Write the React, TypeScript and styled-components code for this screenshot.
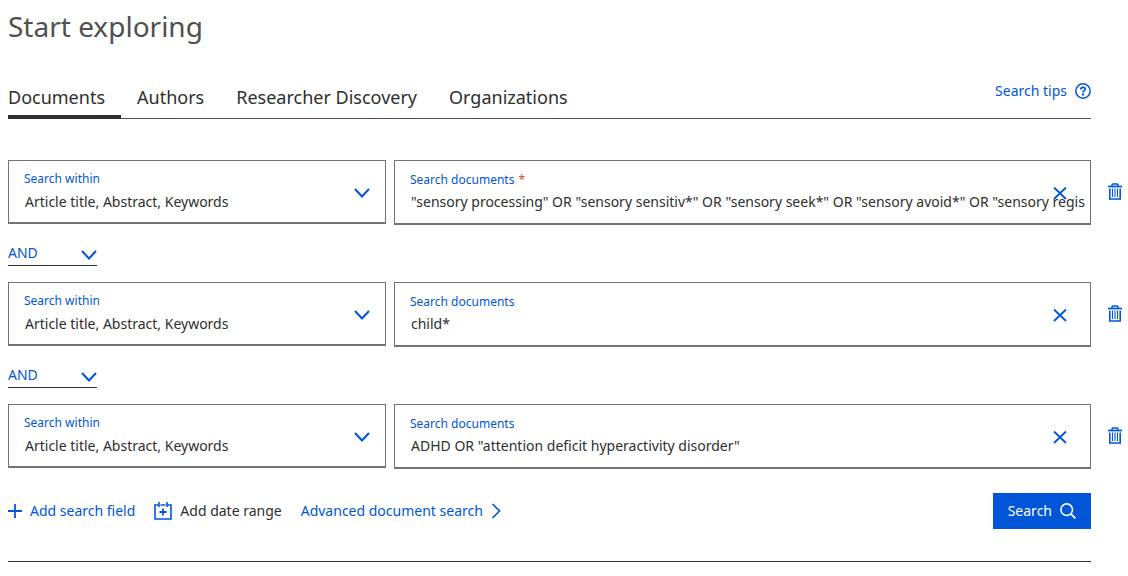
import React, { useState } from "react";
import styled, { createGlobalStyle } from "styled-components";

const blue = "#0056d6";
const ink = "#2e2e2e";

const GlobalStyle = createGlobalStyle`
  *, *::before, *::after { box-sizing: border-box; }
  body {
    margin: 0;
    background: #fff;
    color: ${ink};
    font-family: "Noto Sans", "Open Sans", sans-serif;
    font-size: 14px;
    line-height: 20px;
  }
  button, input, select { font: inherit; color: inherit; letter-spacing: inherit; }
  button { background: none; border: 0; padding: 0; cursor: pointer; }
`;

const Page = styled.main`
  padding: 8px 0 8px 8px;
`;

const Content = styled.div`
  margin-right: 37px;
`;

const Title = styled.h1`
  margin: 0;
  font-size: 28px;
  line-height: 36px;
  font-weight: 400;
  color: #505050;
`;

const TabBar = styled.div`
  display: flex;
  justify-content: space-between;
  align-items: flex-start;
  margin-top: 36px;
  border-bottom: 1px solid #505050;
`;

const TabList = styled.div`
  display: flex;
  gap: 16px;
`;

const Tab = styled.button<{ $active: boolean }>`
  height: 39px;
  margin-bottom: -1px;
  padding: 5px 16px 6px 0;
  border-bottom: 4px solid ${(p) => (p.$active ? ink : "transparent")};
  font-size: 18px;
  line-height: 24px;
`;

const TextLink = styled.a`
  display: inline-flex;
  align-items: center;
  gap: 8px;
  color: ${blue};
  text-decoration: none;
`;

const TipsLink = styled(TextLink)`
  padding-top: 1px;
`;

const Rows = styled.div`
  margin-top: 41px;
`;

const QueryRow = styled.div`
  display: grid;
  grid-template-columns: minmax(0, 378fr) minmax(0, 697fr) 29px;
  column-gap: 8px;
  align-items: start;
`;

const Field = styled.div`
  position: relative;
`;

const FieldLabel = styled.label`
  position: absolute;
  top: 9px;
  left: 16px;
  font-size: 12px;
  line-height: 20px;
  color: ${blue};
  pointer-events: none;
`;

const QueryLabel = styled(FieldLabel)`
  top: 10px;
`;

const Required = styled.span`
  margin-left: 4px;
  color: #d0473b;
`;

const ScopeSelect = styled.select`
  appearance: none;
  display: block;
  width: 100%;
  height: 64px;
  padding: 20px 48px 0 16px;
  border: 1px solid #737373;
  border-bottom-width: 2px;
  border-radius: 0;
  background: #fff;
`;

const QueryInput = styled.input`
  display: block;
  width: 100%;
  height: 65px;
  padding: 19px 2px 0 16px;
  border: 1px solid #737373;
  border-bottom-width: 2px;
  border-radius: 0;
  background: #fff;
  outline: none;
`;

const SelectArrow = styled.svg`
  position: absolute;
  right: 16px;
  top: 50%;
  margin-top: -7px;
  pointer-events: none;
`;

const ClearButton = styled.button`
  position: absolute;
  right: 23px;
  top: 25px;
  width: 16px;
  height: 16px;
  color: ${blue};
`;

const DeleteButton = styled.button`
  display: flex;
  justify-content: center;
  align-items: center;
  height: 64px;
  padding-left: 2px;
  color: ${blue};
`;

const Operator = styled.div`
  position: relative;
  width: 89px;
  margin: 16px 0;
`;

const OperatorSelect = styled.select`
  appearance: none;
  display: block;
  width: 100%;
  height: 25px;
  padding: 0 24px 0 0;
  border: 0;
  border-bottom: 1px solid ${ink};
  border-radius: 0;
  background: #fff;
  color: ${blue};
`;

const Actions = styled.div`
  display: flex;
  align-items: center;
  gap: 19px;
  padding: 24px 0 32px;
  border-bottom: 1px solid ${ink};
`;

const ActionButton = styled.button<{ $plain?: boolean }>`
  display: inline-flex;
  align-items: center;
  gap: 8px;
  color: ${(p) => (p.$plain ? ink : blue)};
  white-space: nowrap;
`;

const SearchButton = styled.button`
  display: inline-flex;
  justify-content: center;
  align-items: center;
  gap: 8px;
  height: 36px;
  margin-left: auto;
  padding: 0 15px;
  background: ${blue};
  color: #fff;
`;

const chevronPath = "M1 4 L8 11.5 L15 4";
const stroke = { fill: "none", stroke: blue, strokeWidth: 2 } as const;

const ArrowIcon = () => (
  <SelectArrow width="16" height="16" viewBox="0 0 16 16" {...stroke} aria-hidden="true">
    <path d={chevronPath} />
  </SelectArrow>
);

const OperatorArrow = styled(SelectArrow)`
  right: 0;
`;

const HelpIcon = () => (
  <svg width="16" height="16" viewBox="0 0 16 16" fill="none" stroke={blue} aria-hidden="true">
    <circle cx="8" cy="8" r="7.2" strokeWidth="1.5" />
    <path d="M5.8 6.5 C5.8 3.6 10.2 3.7 10.2 6.2 C10.2 7.7 8 7.6 8 9.5" strokeWidth="1.8" />
    <path d="M8 10.6 V12.4" strokeWidth="2" />
  </svg>
);

const CloseIcon = () => (
  <svg width="16" height="16" viewBox="0 0 16 16" {...stroke} display="block" aria-hidden="true">
    <path d="M2 2.5 L14 14 M14 2.5 L2 14" strokeWidth="1.8" />
  </svg>
);

const TrashIcon = () => (
  <svg width="16" height="18" viewBox="0 0 16 18" fill="none" stroke={blue} strokeWidth="1.5" aria-hidden="true">
    <path d="M1 3.5 H15" strokeWidth="1.7" />
    <path d="M5 3.5 V2 Q5 1 6 1 H10 Q11 1 11 2 V3.5" />
    <path d="M2.8 5.5 V16 H13.2 V5.5" strokeWidth="1.6" />
    <path d="M5.5 5.5 V14 M8 5.5 V14 M10.5 5.5 V14" strokeWidth="1.1" />
  </svg>
);

const PlusIcon = () => (
  <svg width="14" height="14" viewBox="0 0 14 14" {...stroke} strokeWidth="1.8" aria-hidden="true">
    <path d="M7 0 V14 M0 7 H14" />
  </svg>
);

const CalendarIcon = () => (
  <svg width="18" height="18" viewBox="0 0 18 18" {...stroke} strokeWidth="1.6" aria-hidden="true">
    <path d="M4.5 3 H1 V17 H17 V3 H13.5 M6.5 3 H11.5" />
    <path d="M5 0 V5 M13 0 V5" />
    <path d="M9 6.5 V13.5 M5.5 10 H12.5" strokeWidth="1.8" />
  </svg>
);

const ChevronRightIcon = () => (
  <svg width="10" height="16" viewBox="0 0 10 16" {...stroke} strokeWidth="1.7" aria-hidden="true">
    <path d="M1.5 1 L8.5 8 L1.5 15" />
  </svg>
);

const SearchIcon = () => (
  <svg width="16" height="16" viewBox="0 0 16 16" fill="none" stroke="#fff" strokeWidth="1.6" aria-hidden="true">
    <circle cx="6.7" cy="6.7" r="5.8" />
    <path d="M10.9 10.9 L15.4 15.4" strokeWidth="1.9" />
  </svg>
);

const tabs = ["Documents", "Authors", "Researcher Discovery", "Organizations"];

const initialQueries = [
  '"sensory processing" OR "sensory sensitiv*" OR "sensory seek*" OR "sensory avoid*" OR "sensory regis',
  "child*",
  'ADHD OR "attention deficit hyperactivity disorder"',
];

export default function App() {
  const [active, setActive] = useState(0);
  const [queries, setQueries] = useState(initialQueries);

  const update = (index: number, value: string) =>
    setQueries(queries.map((q, i) => (i === index ? value : q)));

  return (
    <Page>
      <GlobalStyle />
      <Content>
        <Title>Start exploring</Title>
        <TabBar>
          <TabList role="tablist">
            {tabs.map((tab, i) => (
              <Tab
                key={tab}
                type="button"
                role="tab"
                aria-selected={i === active}
                $active={i === active}
                onClick={() => setActive(i)}
              >
                {tab}
              </Tab>
            ))}
          </TabList>
          <TipsLink href="#tips">
            Search tips
            <HelpIcon />
          </TipsLink>
        </TabBar>
      </Content>

      <Rows>
        {queries.map((query, i) => (
          <React.Fragment key={i}>
            {i > 0 && (
              <Operator>
                <OperatorSelect aria-label="Operator" defaultValue="AND">
                  <option>AND</option>
                  <option>OR</option>
                  <option>AND NOT</option>
                </OperatorSelect>
                <OperatorArrow width="16" height="16" viewBox="0 0 16 16" {...stroke} aria-hidden="true">
                  <path d={chevronPath} />
                </OperatorArrow>
              </Operator>
            )}
            <QueryRow>
              <Field>
                <ScopeSelect id={`scope-${i}`}>
                  <option>Article title, Abstract, Keywords</option>
                </ScopeSelect>
                <FieldLabel htmlFor={`scope-${i}`}>Search within</FieldLabel>
                <ArrowIcon />
              </Field>
              <Field>
                <QueryInput
                  id={`query-${i}`}
                  type="text"
                  value={query}
                  required={i === 0}
                  spellCheck={false}
                  onChange={(e) => update(i, e.target.value)}
                />
                <QueryLabel htmlFor={`query-${i}`}>
                  Search documents
                  {i === 0 && <Required>*</Required>}
                </QueryLabel>
                <ClearButton type="button" aria-label="Clear" onClick={() => update(i, "")}>
                  <CloseIcon />
                </ClearButton>
              </Field>
              <DeleteButton
                type="button"
                aria-label="Delete search field"
                onClick={() => setQueries(queries.filter((_, n) => n !== i))}
              >
                <TrashIcon />
              </DeleteButton>
            </QueryRow>
          </React.Fragment>
        ))}
      </Rows>

      <Content>
        <Actions>
          <ActionButton type="button" onClick={() => setQueries([...queries, ""])}>
            <PlusIcon />
            Add search field
          </ActionButton>
          <ActionButton type="button" $plain>
            <CalendarIcon />
            Add date range
          </ActionButton>
          <TextLink href="#advanced">
            Advanced document search
            <ChevronRightIcon />
          </TextLink>
          <SearchButton type="submit">
            Search
            <SearchIcon />
          </SearchButton>
        </Actions>
      </Content>
    </Page>
  );
}
